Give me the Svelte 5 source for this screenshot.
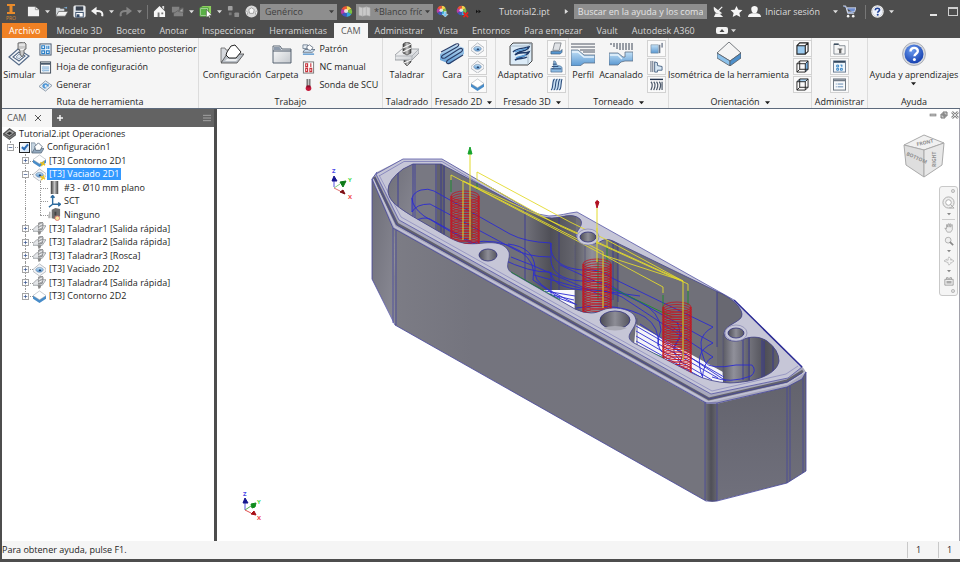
<script>
	const tabs = [
		'Modelo 3D',
		'Boceto',
		'Anotar',
		'Inspeccionar',
		'Herramientas',
		'CAM',
		'Administrar',
		'Vista',
		'Entornos',
		'Para empezar',
		'Vault',
		'Autodesk A360'
	];
	let activeTab = 'CAM';

	// RIBBON PANELS, LEFT TO RIGHT
	const panels = [
		{
			title: 'Ruta de herramienta',
			big: [{ label: 'Simular', icon: 'simulate' }],
			list: [
				{ label: 'Ejecutar procesamiento posterior', icon: 'post' },
				{ label: 'Hoja de configuración', icon: 'sheet' },
				{ label: 'Generar', icon: 'generate' }
			]
		},
		{
			title: 'Trabajo',
			big: [
				{ label: 'Configuración', icon: 'setup' },
				{ label: 'Carpeta', icon: 'folder' }
			],
			list: [
				{ label: 'Patrón', icon: 'pattern' },
				{ label: 'NC manual', icon: 'nc' },
				{ label: 'Sonda de SCU', icon: 'probe' }
			]
		},
		{ title: 'Taladrado', big: [{ label: 'Taladrar', icon: 'drill' }] },
		{
			title: 'Fresado 2D',
			more: true,
			big: [{ label: 'Cara', icon: 'face' }],
			mini: ['pocket', 'pocket', 'contour']
		},
		{
			title: 'Fresado 3D',
			more: true,
			big: [{ label: 'Adaptativo', icon: 'adaptive' }],
			mini: ['parallel', 'steps', 'flow']
		},
		{
			title: 'Torneado',
			more: true,
			big: [
				{ label: 'Perfil', icon: 'profile' },
				{ label: 'Acanalado', icon: 'groove' }
			],
			mini: ['turnface', 'turnpart', 'thread']
		},
		{
			title: 'Orientación',
			more: true,
			big: [{ label: 'Isométrica de la herramienta', icon: 'iso' }],
			mini: ['cubefront', 'cuberight', 'cubetop']
		},
		{ title: 'Administrar', big: [], mini: ['library', 'numbers', 'tasks'] },
		{ title: 'Ayuda', big: [{ label: 'Ayuda y aprendizajes', icon: 'help', drop: true }] }
	];

	// OPERATIONS TREE
	const nodes = [
		{ level: 0, icon: 'part', label: 'Tutorial2.ipt Operaciones' },
		{ level: 1, icon: 'job', label: 'Configuración1', sign: '-', check: true },
		{ level: 2, icon: 'contour', label: '[T3] Contorno 2D1', sign: '+', mark: true },
		{ level: 2, icon: 'pocket', label: '[T3] Vaciado 2D1', sign: '-', mark: true },
		{ level: 3, icon: 'tool', label: '#3 - Ø10 mm plano' },
		{ level: 3, icon: 'wcs', label: 'SCT' },
		{ level: 3, icon: 'none', label: 'Ninguno', last: true },
		{ level: 2, icon: 'bore', label: '[T3] Taladrar1 [Salida rápida]', sign: '+' },
		{ level: 2, icon: 'bore', label: '[T3] Taladrar2 [Salida rápida]', sign: '+' },
		{ level: 2, icon: 'bore', label: '[T3] Taladrar3 [Rosca]', sign: '+' },
		{ level: 2, icon: 'pocket', label: '[T3] Vaciado 2D2', sign: '+' },
		{ level: 2, icon: 'bore', label: '[T3] Taladrar4 [Salida rápida]', sign: '+' },
		{ level: 2, icon: 'contour', label: '[T3] Contorno 2D2', sign: '+', last: true }
	];
	let selected = '[T3] Vaciado 2D1';

	// HELIX OF THE TOOL ENTRY, ONE ELLIPSE PER TURN
	const helixes = [
		{ x: 465, top: 196, bottom: 250 },
		{ x: 597, top: 264, bottom: 316 },
		{ x: 677, top: 307, bottom: 376 }
	];
	function turns(h) {
		const out = [];
		for (let y = h.top; y < h.bottom; y += 2.5) out.push(y);
		return out;
	}

	const cavity =
		'M388 190Q388 180 403 169L413 164H441L535 214Q543 218 552 218C562 218 572 212 580 219C585 225 576 230 576 236C577 243 588 246 598 243C603 240 606 238 613 241L718 292C730 297 741 306 742 314C743 322 725 324 724 333C724 340 733 343 742 340C750 336 759 336 767 341Q779 350 779 361C777 374 757 382 730 383Q709 382 694 374L634 343C622 336 636 330 636 320C635 311 623 308 613 308C602 308 600 313 591 313Q583 313 575 309L512 273C503 267 511 260 509 252C505 243 495 242 484 243C466 245 460 243 450 238L412 216C396 206 388 200 388 190Z';
	const bores = [
		{ x: 488, y: 255, rx: 9, ry: 6 },
		{ x: 588, y: 237, rx: 8, ry: 5, rim: true },
		{ x: 615, y: 320, rx: 15, ry: 9 },
		{ x: 736, y: 333, rx: 8, ry: 5, rim: true }
	];
</script>

<!-- ICON SHEET -->
<svg class="sheet" aria-hidden="true">
	<defs>
		<linearGradient id="g-blue" x1="0" y1="0" x2="0" y2="1">
			<stop offset="0" stop-color="#c3e1f7" />
			<stop offset="1" stop-color="#5b99d2" />
		</linearGradient>
		<linearGradient id="g-steel" x1="0" y1="0" x2="1" y2="0">
			<stop offset="0" stop-color="#3a3a3a" />
			<stop offset="0.5" stop-color="#c4c4c4" />
			<stop offset="1" stop-color="#444" />
		</linearGradient>
		<linearGradient id="g-paper" x1="0" y1="0" x2="1" y2="1">
			<stop offset="0" stop-color="#fff" />
			<stop offset="1" stop-color="#c3c7cc" />
		</linearGradient>
		<radialGradient id="g-help" cx="0.4" cy="0.3" r="0.8">
			<stop offset="0" stop-color="#6a9bf0" />
			<stop offset="1" stop-color="#0c36a8" />
		</radialGradient>
	</defs>
	<symbol id="i-new" viewBox="0 0 14 14"><path d="M1 2h8l4 3v7H1z" fill="#f1f1f1" /><path d="M9 2v3h4" fill="none" stroke="#999" /></symbol>
	<symbol id="i-open" viewBox="0 0 14 14"><path d="M1 12V3h4l1 1h4v3H4l-3 5z" fill="#cfd3d6" /><path d="M4 7h10l-3 5H1z" fill="#f2f2f2" stroke="#555" stroke-width=".6" /><path d="M9 3l4-1v2z" fill="#77a8cf" /></symbol>
	<symbol id="i-save" viewBox="0 0 14 14"><rect x="1" y="1" width="12" height="12" rx="1" fill="#dde3ea" stroke="#f5f5f5" /><rect x="3" y="1.500" width="8" height="4.500" fill="#3b4350" /><rect x="3" y="8" width="8" height="5" fill="#fff" stroke="#344a66" /><rect x="4" y="10" width="3" height="3" fill="#344a66" /></symbol>
	<symbol id="i-undo" viewBox="0 0 14 14"><path d="M12 12c1-4-1-6-7-5.500" fill="none" stroke="#f4f4f4" stroke-width="2.200" /><path d="M0 6.500l6-4.500v9z" fill="#f4f4f4" /></symbol>
	<symbol id="i-redo" viewBox="0 0 14 14"><path d="M2 12c-1-4 1-6 7-5.500" fill="none" stroke="#858585" stroke-width="2.200" /><path d="M14 6.500L8 2v9z" fill="#858585" /></symbol>
	<symbol id="i-home" viewBox="0 0 14 14"><path d="M7 1L1 7v6h12V7z" fill="#f7f7f7" /><path d="M10 1h2v4l-2-2z" fill="#ddd" /><path d="M5 8h2v5H5zM9 8h2v2H9z" fill="#777" /></symbol>
	<symbol id="i-render" viewBox="0 0 14 14"><path d="M1 2h8v6H1zM6 7h7v5H3v-3z" fill="#828282" /><path d="M3 9l9-6M8 7l5-4v5z" fill="#a6a6a6" stroke="#666" /></symbol>
	<symbol id="i-pick" viewBox="0 0 14 14"><path d="M1 3l3-2h9v8l-2 3H1z" fill="#8bd05c" /><path d="M1 3h9v9H1z" fill="#e9f7df" stroke="#3c9130" /><path d="M2 4h7v7H2z" fill="#59b046" /><path d="M8 5l6 6-3 .2 1.500 2.300-1.300.500L10 12l-2 1.500z" fill="#fff" stroke="#333" stroke-width=".5" /></symbol>
	<symbol id="i-nodes" viewBox="0 0 14 14"><rect x="1" y="1" width="5" height="5" rx="1" fill="#a0a0a0" /><rect x="8" y="8" width="5" height="5" rx="1" fill="#8c8c8c" /><rect x="2" y="8" width="3" height="3" fill="#777" /></symbol>
	<symbol id="i-ball" viewBox="0 0 14 14"><circle cx="7" cy="7" r="6.500" fill="#d9d9d9" /><path d="M7 3l3 2-1 4H5L4 5zM1 6l2 2-1 3M13 6l-2 2 1 3" stroke="#8d8d8d" fill="#f7f7f7" stroke-width=".8" /></symbol>
	<symbol id="i-wheel" viewBox="0 0 14 14"><path d="M7 7V1a6 6 0 0 1 5.200 3z" fill="#f6d24a" /><path d="M7 7l5.200-3a6 6 0 0 1 0 6z" fill="#7bc043" /><path d="M7 7l5.200 3A6 6 0 0 1 7 13z" fill="#35a7dd" /><path d="M7 7v6a6 6 0 0 1-5.200-3z" fill="#3d55c5" /><path d="M7 7l-5.200 3a6 6 0 0 1 0-6z" fill="#b63ca6" /><path d="M7 7L1.800 4A6 6 0 0 1 7 1z" fill="#ee5335" /><circle cx="6.500" cy="6.500" r="2.200" fill="#fff" opacity=".8" /></symbol>
	<symbol id="i-wheeladd" viewBox="0 0 14 14"><use href="#i-wheel" width="12" height="12" /><path d="M9 7h2v3h2l-3 3-3-3h2z" fill="#6ec4f2" stroke="#fff" stroke-width=".5" /></symbol>
	<symbol id="i-wheeldel" viewBox="0 0 14 14"><use href="#i-wheel" width="12" height="12" /><path d="M8 8l5 5M13 8l-5 5" stroke="#e5231b" stroke-width="1.800" /></symbol>
	<symbol id="i-book" viewBox="0 0 14 14"><path d="M1 2l4 1v9l-4-1zM5 3l4-1v9l-4 1zM9 2l4 1v9l-4-1z" fill="#c9c9c9" stroke="#aaa" stroke-width=".5" /></symbol>
	<symbol id="i-caret" viewBox="0 0 6 6"><path d="M0 1.500h6L3 5z" fill="currentColor" /></symbol>
	<symbol id="i-next" viewBox="0 0 6 6"><path d="M1 0l4 3-4 3z" fill="currentColor" /></symbol>
	<symbol id="i-chev" viewBox="0 0 6 6"><path d="M0 1l2.500 2L0 5zM3 1l3 2-3 2z" fill="#111" /></symbol>
	<symbol id="i-dish" viewBox="0 0 14 14"><path d="M2 2c-1 6 4 9 9 7z" fill="#f3f3f3" /><path d="M6 7l5-5" stroke="#f3f3f3" stroke-width="1.300" /><path d="M4 9l-2 4h10l-3-3z" fill="#f3f3f3" /></symbol>
	<symbol id="i-star" viewBox="0 0 14 14"><path d="M7 1l2 4 4.400.500-3.300 3 1 4.500L7 10.900 2.900 13l1-4.500-3.300-3L5 5z" fill="#f6f6f6" /></symbol>
	<symbol id="i-user" viewBox="0 0 14 14"><path d="M3.500 4c0-4 7-4 7 0 0 2-1 4-2 5h-3c-1-1-2-3-2-5z" fill="#f6f6f6" /><path d="M0 13c0-3 3-4 5-4h4c2 0 5 1 5 4z" fill="#f6f6f6" /></symbol>
	<symbol id="i-cart" viewBox="0 0 14 14"><path d="M0 1h3l2 8h7M4 3h10l-1.500 4.500H5z" fill="#6f8dcf" stroke="#e4e9f5" stroke-width=".8" /><circle cx="5.500" cy="12" r="1.400" fill="#f3f3f3" /><circle cx="11" cy="12" r="1.400" fill="#f3f3f3" /></symbol>
	<symbol id="i-help" viewBox="0 0 24 24"><circle cx="12" cy="12" r="11.500" fill="#d6d9df" stroke="#8b8f98" stroke-width=".6" /><circle cx="12" cy="12" r="9.500" fill="url(#g-help)" /><path d="M8.500 9.500c0-5 7.500-4.500 7.300-.3-.1 2.500-3.300 2.700-3.300 5" fill="none" stroke="#fff" stroke-width="2.400" /><circle cx="12.400" cy="17.500" r="1.500" fill="#fff" /></symbol>
	<symbol id="i-helpw" viewBox="0 0 24 24"><circle cx="12" cy="12" r="11.500" fill="#f4f4f4" /><circle cx="12" cy="12" r="9.500" fill="#eef2fb" stroke="#bbb" /><path d="M8 9.500c0-5 8-4.500 7.800-.3-.1 2.500-3.500 2.700-3.500 5" fill="none" stroke="#1d3f94" stroke-width="3" /><circle cx="12.400" cy="18" r="1.900" fill="#1d3f94" /></symbol>
	<symbol id="i-simulate" viewBox="0 0 24 24"><path d="M2 15l9-8 11 7-10 9z" fill="#f6f8fa" stroke="#566b88" stroke-width="1.200" /><path d="M6 15l6-5 6 4-6 5z" fill="#fff" stroke="#566b88" stroke-width="1.100" /><path d="M9 15l3-3 3 2-3 3z" fill="#dce6f0" stroke="#7d8fa8" stroke-width=".8" /><path d="M11 1l6-1 2 2v5l-2 1v4l-2 3-2-3V8l-2-1z" fill="#c9c9c9" stroke="#555" stroke-width=".8" /><path d="M12 3l6 0M13 8l4-1" stroke="#fff" /></symbol>
	<symbol id="i-post" viewBox="0 0 14 14"><rect x="1" y="1" width="12" height="12" fill="#eaf3fb" stroke="#45556b" /><path d="M3 3h3v3H3zM8.500 3v3.500M10.500 3v3.500M3 8.500h3v3H3zM8 8.500h3v3H8z" fill="none" stroke="#2b7fc7" stroke-width="1.200" /></symbol>
	<symbol id="i-sheet" viewBox="0 0 14 14"><rect x="1.500" y="1" width="11" height="12" fill="#fff" stroke="#3c4856" /><path d="M2 2h10v2H2z" fill="#4a5a6c" /><path d="M3 6.500h8M3 8.500h8M3 10.500h8" stroke="#6aa3d4" /><path d="M5 5v7" stroke="#b5d0e8" /></symbol>
	<symbol id="i-generate" viewBox="0 0 14 14"><path d="M0 8l7-6 7 5-7 6z" fill="#e8edf2" stroke="#8796a8" /><path d="M3.500 7.500c1-4 5-3 6-1.500l1-1v3H7.500L8.500 7c-1-1-2-1-2.500.500 0 1 1 2 3 2-3 2-5 0-5.500-2z" fill="#4e96d6" /></symbol>
	<symbol id="i-setup" viewBox="0 0 24 24"><path d="M1 6h4l1 2h3v12H1z" fill="#d6d9de" stroke="#666" stroke-width=".8" /><path d="M7 12h17l-7 9H1z" fill="#b9bfc6" stroke="#444" stroke-width=".8" /><path d="M7 10l4-6 4-1 6 7-5 6H9l-3-3z" fill="#fff" stroke="#222" /><path d="M7 17h11l-2 2H5z" fill="#eef0f2" /></symbol>
	<symbol id="i-job" viewBox="0 0 14 14"><path d="M0 2h4l1 2v8H0z" fill="#c4d3e0" stroke="#6d7f92" stroke-width=".7" /><path d="M4 8h10l-3 5H1z" fill="#92a9bf" stroke="#4b5c6e" stroke-width=".7" /><path d="M4 6l4-4 4 4-2 4H5z" fill="#fff" stroke="#44566a" stroke-width=".8" /></symbol>
	<symbol id="i-folder" viewBox="0 0 24 24"><path d="M3 4h7l2 3h9v14H3z" fill="url(#g-paper)" stroke="#4b5767" stroke-width=".9" /><path d="M3 9h18" stroke="#4b5767" /><path d="M4 5h5.500l2 3H4z" fill="#8d9aab" /></symbol>
	<symbol id="i-pattern" viewBox="0 0 14 14"><path d="M1 2h5v4H1z" fill="#e6edf3" stroke="#5b6c80" stroke-width=".8" /><path d="M3 7h11l-3 3H1z" fill="#cfe2f3" stroke="#4e5f73" stroke-width=".8" /><path d="M5 4l3-2 4 3-3 3-3-1z" fill="#fff" stroke="#4e5f73" stroke-width=".8" /><path d="M1 12h12" stroke="#5a97cf" stroke-width="1.500" /></symbol>
	<symbol id="i-nc" viewBox="0 0 14 14"><rect x="1.500" y="1" width="11" height="12" fill="#fff" stroke="#777" /><path d="M4 3h2v3H4zM9.500 2.500v4M4 8h2v3.500H4zM8.500 8h2v3.500h-2z" fill="none" stroke="#c8323a" stroke-width="1.200" /></symbol>
	<symbol id="i-probe" viewBox="0 0 14 14"><path d="M5 0h4v8H5z" fill="url(#g-steel)" /><circle cx="7" cy="10" r="3" fill="#c3193b" /><path d="M5 7h4v2H5z" fill="#87102a" /></symbol>
	<symbol id="i-drill" viewBox="0 0 24 24"><path d="M9 16h7v4l-4 4-3-3z" fill="url(#g-steel)" stroke="#333" stroke-width=".6" /><path d="M0 13l7-6h17v4l-7 7H0z" fill="url(#g-paper)" stroke="#8b8f95" stroke-width=".8" /><path d="M0 14h17l7-7M17 14v4" fill="none" stroke="#a6aab0" stroke-width=".8" /><path d="M8 2l3-2 4 1 1 1v9l-4 2-4-2z" fill="url(#g-steel)" stroke="#333" stroke-width=".6" /><path d="M8 6l8-4M8 10l8-4M9 21l7-3" stroke="#f6f6f6" stroke-width="1.200" /></symbol>
	<symbol id="i-bore" viewBox="0 0 14 14"><path d="M0 8l4-4h10l-4 6H0z" fill="#e3e5e8" stroke="#8b8f95" stroke-width=".8" /><path d="M6 1l4-1 1 2-1 6-4 1z" fill="#a5a8ac" stroke="#666" stroke-width=".6" /><path d="M5 10h4l-1 3-2 1z" fill="#888" /><path d="M6 4l4-2M6 7l4-2" stroke="#fff" /></symbol>
	<symbol id="i-face" viewBox="0 0 24 24"><path d="M0 12L14 2l10 4v6L10 22 0 18z" fill="url(#g-blue)" /><path d="M1 10L16 2c3-1 4 1 1 3L3 13c-3 2-1 4 2 3l14-9c3-2 5 1 2 3L8 18c-3 2-1 5 2 3l13-8" fill="none" stroke="#2a3c66" stroke-width="1.100" /></symbol>
	<symbol id="i-pocket" viewBox="0 0 14 14"><path d="M0 7l7-6 7 5v3l-7 5-7-5z" fill="#f4f5f7" stroke="#9aa1a8" stroke-width=".7" /><path d="M3 7c1-3 7-3 8 0 0 4-8 4-8 0z" fill="url(#g-blue)" stroke="#5a7ba0" stroke-width=".6" /><path d="M6 8l1.500-1.500L9 8l-1.500 1z" fill="#203a63" /></symbol>
	<symbol id="i-contour" viewBox="0 0 14 14"><path d="M0 6l7 4 7-4v3.500L7 14 0 9.500z" fill="#478cc9" /><path d="M0 6l7-5 7 5-7 4.500z" fill="#fff" stroke="#a0a6ad" stroke-width=".6" /></symbol>
	<symbol id="i-adaptive" viewBox="0 0 24 24"><path d="M1 4l3-3h19v18l-4 4H1z" fill="#dcebf7" stroke="#444" /><path d="M1 4h18v19M19 4l4-3" fill="none" stroke="#90a0b0" stroke-width=".7" /><path d="M4 10C9 5 15 7 20 5c-2 5-10 3-14 8 5-4 10-1 14-3-2 5-10 4-14 8 4-2 9-1 12-3" fill="none" stroke="#1e3968" stroke-width="1.500" /><path d="M6 10c4-3 8-1 12-4M7 16c3-2 6-1 10-3" fill="none" stroke="#5a9bd7" stroke-width="1.500" /></symbol>
	<symbol id="i-parallel" viewBox="0 0 14 14"><path d="M5 1h7l-2 8H3z" fill="#dfe2e6" stroke="#70767e" stroke-width=".8" /><path d="M1 10h10l2-2v3l-2 2H1z" fill="#5596d0" stroke="#34495f" stroke-width=".6" /></symbol>
	<symbol id="i-steps" viewBox="0 0 14 14"><path d="M4 1c4 0 1 4 5 5s4 1 4 5v2H1V9h3z" fill="#8dbbe3" stroke="#47688c" stroke-width=".7" /><path d="M3 4.500h4M2 7h7M2 9.500h10" stroke="#294a76" /></symbol>
	<symbol id="i-flow" viewBox="0 0 14 14"><path d="M3 1h10l-2 12H1z" fill="#c6def2" /><path d="M1 13C4 12 2 2 5 1M4 13c3-1 1-11 4-12M7 13c3-1 1-11 4-12M10 13c3-2 1-8 3-12" fill="none" stroke="#274878" stroke-width="1.100" /></symbol>
	<symbol id="i-profile" viewBox="0 0 24 24"><path d="M0 8h7l6 5h11v8H13l-4 3H0z" fill="url(#g-blue)" stroke="#5d7086" stroke-width=".8" /><path d="M0 2h24M0 5h24M9 8h15M12 10h12" stroke="#3d4656" stroke-width=".9" /><path d="M1 10h6l6 5h10" stroke="#e9f4fc" fill="none" stroke-width="1.500" /></symbol>
	<symbol id="i-groove" viewBox="0 0 24 24"><path d="M0 11h9l5 4h2v-5h8v9h-8l-4 1-3 3H0z" fill="url(#g-blue)" stroke="#5d7086" stroke-width=".8" /><path d="M2 1v2M5 1v4M8 1v6M11 1v7M14 1v7M17 1v7M20 1v7M23 1v7" stroke="#3d4656" /><path d="M1 13h8l4 4" stroke="#e9f4fc" fill="none" stroke-width="1.500" /></symbol>
	<symbol id="i-turnface" viewBox="0 0 14 14"><path d="M1 3h8v9H1z" fill="url(#g-blue)" stroke="#6e8296" stroke-width=".6" /><path d="M10.500 3v9M13 1v5" stroke="#2d3d57" /></symbol>
	<symbol id="i-turnpart" viewBox="0 0 14 14"><path d="M5 2l3 1v3l5 1v4H8v2H5z" fill="#d8e8f5" stroke="#4b6584" /><path d="M1 1v12M3 1v12" stroke="#2d3d57" stroke-width=".8" /></symbol>
	<symbol id="i-thread" viewBox="0 0 14 14"><path d="M0 1.500h14" stroke="#24344f" stroke-width="1.500" /><path d="M1 4c3 3 1 6 0 9M4 4c3 3 1 6 0 9M7 4c3 3 1 6 0 9M10 4c3 3 1 6 0 9M13 4v9" fill="none" stroke="#4d5a6c" stroke-width="1.300" /></symbol>
	<symbol id="i-iso" viewBox="0 0 24 24"><path d="M0 11L12 0l12 11-11 8z" fill="#f4f4f4" stroke="#565b62" stroke-width=".8" /><path d="M0 11l13 8v5L0 16z" fill="#8cc1ea" stroke="#565b62" stroke-width=".8" /><path d="M13 19l11-8v5l-11 8z" fill="#4d8fca" stroke="#565b62" stroke-width=".8" /></symbol>
	<symbol id="i-cubefront" viewBox="0 0 14 14"><path d="M1 4h9v9H1z" fill="#9ccbf0" /><path d="M1 4h9v9H1zM1 4l3-3h9v9l-3 3M10 4l3-3" fill="none" stroke="#222" stroke-width="1.200" /></symbol>
	<symbol id="i-cuberight" viewBox="0 0 14 14"><path d="M10 4l3-3v9l-3 3z" fill="#7ab2e2" /><path d="M1 4h9v9H1zM1 4l3-3h9v9l-3 3M10 4l3-3M4 1v9h9M4 10l-3 3" fill="none" stroke="#222" /></symbol>
	<symbol id="i-cubetop" viewBox="0 0 14 14"><path d="M1 4l3-3h9l-3 3z" fill="#a8d0ee" /><path d="M1 4h9v9H1zM1 4l3-3h9v9l-3 3M10 4l3-3M4 1v9h9M4 10l-3 3" fill="none" stroke="#222" /></symbol>
	<symbol id="i-library" viewBox="0 0 14 14"><path d="M1 2h5l1 2h6v9H1z" fill="#f5f5f5" stroke="#66707b" stroke-width=".8" /><path d="M1 2.500h5" stroke="#3f5062" stroke-width="1.500" /><path d="M5 7h5v1H9v4H6.500V8H5z" fill="#666" /></symbol>
	<symbol id="i-numbers" viewBox="0 0 14 14"><rect x=".5" y="1" width="13" height="12" fill="#eef6fc" stroke="#66788e" /><path d="M1 2h12" stroke="#34495f" stroke-width="2" /><path d="M4 5.500h2v2H4zM8 5.500h2M9.500 5.500v2M4 9h2v2H4zM8 9h2v2H8z" fill="none" stroke="#2e7fc4" /></symbol>
	<symbol id="i-tasks" viewBox="0 0 14 14"><rect x=".5" y="1" width="13" height="12" fill="#f7f9fb" stroke="#66707b" /><path d="M1 2.500h12" stroke="#707a86" stroke-width="2" /><path d="M3 6.500h1M5 6.500h6M3 9.500h1M5 9.500h6" stroke="#5a83ad" /></symbol>
	<symbol id="i-part" viewBox="0 0 14 14"><path d="M0 7l7-6 7 5v3l-7 5-7-5z" fill="#555" /><path d="M2 7l5-4 5 3-5 4z" fill="#a4a4a4" /><path d="M4 7l3-2 3 1.500-3 2z" fill="#333" /><path d="M0 8l7 4 7-5" fill="none" stroke="#999" stroke-width=".7" /></symbol>
	<symbol id="i-tool" viewBox="0 0 14 14"><path d="M3 0h8v14H3z" fill="url(#g-steel)" /></symbol>
	<symbol id="i-wcs" viewBox="0 0 14 14"><path d="M5 1v9h8M5 10l-4 3M3 3l2-2.500L7 3M11 8l2.500 2L11 12" fill="none" stroke="#2d6b9e" stroke-width="1.500" /></symbol>
	<symbol id="i-none" viewBox="0 0 14 14"><path d="M4 2l4-2 5 1v8l-5 3-4-1z" fill="#6d6d6d" /><path d="M2 4v7M0 7v4" stroke="#888" /><path d="M7 4h2v4H7z" fill="#444" /><circle cx="10" cy="11" r="2.500" fill="#f6e7a1" stroke="#d66" stroke-width=".8" /></symbol>
</svg>

<div class="app">
	<header class="titlebar">
		<svg class="logo" viewBox="0 0 14 18" aria-label="Inventor Professional">
			<path d="M3 1h8v2H8.500v6H11v2H3V9h2.500V3H3z" fill="#e98b2b" />
			<text x="2" y="17" font-size="5" fill="#d98a35">PRO</text>
		</svg>
		<div class="quick">
			<button aria-label="Nuevo"><svg class="ico"><use href="#i-new" /></svg></button>
			<button aria-label="Opciones de nuevo"><svg class="caret"><use href="#i-caret" /></svg></button>
			<button aria-label="Abrir"><svg class="ico"><use href="#i-open" /></svg></button>
			<button aria-label="Guardar"><svg class="ico"><use href="#i-save" /></svg></button>
			<button aria-label="Deshacer"><svg class="ico"><use href="#i-undo" /></svg></button>
			<button aria-label="Historial de deshacer"><svg class="caret"><use href="#i-caret" /></svg></button>
			<button aria-label="Rehacer"><svg class="ico"><use href="#i-redo" /></svg></button>
			<button class="dim" aria-label="Historial de rehacer"><svg class="caret"><use href="#i-caret" /></svg></button>
			<span class="sep"></span>
			<button aria-label="Inicio"><svg class="ico"><use href="#i-home" /></svg></button>
			<button aria-label="Actualizar"><svg class="ico"><use href="#i-render" /></svg></button>
			<button aria-label="Opciones de actualizar"><svg class="caret"><use href="#i-caret" /></svg></button>
			<button aria-label="Seleccionar"><svg class="ico"><use href="#i-pick" /></svg></button>
			<button aria-label="Prioridad de selección"><svg class="caret"><use href="#i-caret" /></svg></button>
			<button aria-label="Parámetros"><svg class="ico"><use href="#i-nodes" /></svg></button>
			<button aria-label="Material"><svg class="ico"><use href="#i-ball" /></svg></button>
		</div>
		<div class="looks">
			<label class="combo">
				<select aria-label="Material"><option>Genérico</option></select>
				<svg class="caret"><use href="#i-caret" /></svg>
			</label>
			<button aria-label="Aspecto"><svg class="ico"><use href="#i-wheel" /></svg></button>
			<label class="combo">
				<svg class="ico"><use href="#i-book" /></svg>
				<select aria-label="Aspecto"><option>*Blanco frío</option></select>
				<svg class="caret"><use href="#i-caret" /></svg>
			</label>
			<button aria-label="Ajustar"><svg class="ico"><use href="#i-wheeladd" /></svg></button>
			<button class="spaced" aria-label="Borrar"><svg class="ico"><use href="#i-wheeldel" /></svg></button>
			<button class="spaced" aria-label="Más"><svg class="caret"><use href="#i-chev" /></svg></button>
		</div>
		<span class="doc">Tutorial2.ipt</span>
		<div class="account">
			<svg class="caret"><use href="#i-next" /></svg>
			<input type="text" aria-label="Buscar" placeholder="Buscar en la ayuda y los comandos" />
			<button aria-label="Comunicaciones"><svg class="ico"><use href="#i-dish" /></svg></button>
			<button aria-label="Favoritos"><svg class="ico"><use href="#i-star" /></svg></button>
			<button class="signin"><svg class="ico"><use href="#i-user" /></svg>Iniciar sesión</button>
			<button aria-label="Opciones de cuenta"><svg class="caret"><use href="#i-caret" /></svg></button>
			<button aria-label="Tienda"><svg class="ico"><use href="#i-cart" /></svg></button>
			<span class="sep spaced"></span>
			<button aria-label="Ayuda"><svg class="ico"><use href="#i-helpw" /></svg></button>
			<button aria-label="Opciones de ayuda"><svg class="caret"><use href="#i-caret" /></svg></button>
		</div>
		<div class="window">
			<button class="min" aria-label="Minimizar"></button>
			<button class="max" aria-label="Maximizar"></button>
		</div>
	</header>

	<nav class="tabs">
		<button class="file">Archivo</button>
		{#each tabs as tab}
			<button class:active={tab === activeTab} on:click={() => (activeTab = tab)}>{tab}</button>
		{/each}
		<button class="fold" aria-label="Minimizar cinta">
			<svg viewBox="0 0 12 8"><rect width="12" height="7" rx="2" fill="#f2f2f2" /><path d="M3.500 5h5L6 2z" fill="#444" /></svg>
			<svg class="caret"><use href="#i-caret" /></svg>
		</button>
	</nav>

	<section class="ribbon">
		{#each panels as panel}
			<div class="panel">
				<div class="tools">
					{#each panel.big as tool}
						<button class="big">
							<svg><use href="#i-{tool.icon}" /></svg>
							<span>{tool.label}</span>
							{#if tool.drop}<svg class="caret"><use href="#i-caret" /></svg>{/if}
						</button>
					{/each}
					{#if panel.list}
						<div class="list">
							{#each panel.list as item}
								<button><svg class="ico"><use href="#i-{item.icon}" /></svg>{item.label}</button>
							{/each}
						</div>
					{/if}
					{#if panel.mini}
						<div class="mini">
							{#each panel.mini as icon}
								<button aria-label={icon}><svg class="ico"><use href="#i-{icon}" /></svg></button>
							{/each}
						</div>
					{/if}
				</div>
				<div class="title">
					{panel.title}
					{#if panel.more}<svg class="caret"><use href="#i-caret" /></svg>{/if}
				</div>
			</div>
		{/each}
	</section>

	<main>
		<aside>
			<div class="browser-tabs">
				<div class="browser-tab">
					CAM
					<button aria-label="Cerrar"><svg viewBox="0 0 8 8"><path d="M1 1l6 6M7 1L1 7" stroke="#555" /></svg></button>
				</div>
				<button class="add" aria-label="Añadir"><svg viewBox="0 0 8 8"><path d="M4 1v6M1 4h6" stroke="#f5f5f5" stroke-width="1.500" /></svg></button>
				<button class="menu" aria-label="Menú"><svg viewBox="0 0 9 8"><path d="M0 1h9M0 4h9M0 7h9" stroke="#aaa" /></svg></button>
			</div>
			<ul class="tree">
				{#each nodes as node}
					<li>
						{#if node.level > 1}<i class="guide" class:line={node.level > 2}></i>{/if}
						{#if node.level > 2}<i class="guide elbow line" class:last={node.last}></i>{/if}
						{#if node.level === 1 || node.level === 2}
							<i class="guide elbow" class:line={node.level === 2} class:last={node.last} class:top={node.level === 1}>
								<button class="sign" aria-label="Expandir {node.label}"><svg viewBox="0 0 7 7"><path d={node.sign === '+' ? 'M1 3.500h5M3.500 1v5' : 'M1 3.500h5'} stroke="#33508c" /></svg></button>
							</i>
						{/if}
						{#if node.check}<input type="checkbox" checked aria-label="Activar {node.label}" />{/if}
						<svg class="ico" viewBox="0 0 14 14">
							<use href="#i-{node.icon}" />
							{#if node.mark}<path d="M8 9l5 3M12 8l-3 5" stroke="#f0c419" stroke-width="1.500" />{/if}
						</svg>
						<button class="name" class:selected={node.label === selected} on:click={() => (selected = node.label)}>{node.label}</button>
					</li>
				{/each}
			</ul>
		</aside>

		<section class="view">
			<svg class="scene" viewBox="217 109 742 432" aria-label="Vista del modelo">
				<defs>
					<clipPath id="c-cavity"><path d={cavity} /></clipPath>
					<linearGradient id="g-end" x1="0" y1="0" x2="1" y2="1">
						<stop offset="0" stop-color="#6d6d78" />
						<stop offset="1" stop-color="#8c8c96" />
					</linearGradient>
					<linearGradient id="g-front" x1="0" y1="0" x2="1" y2="0">
						<stop offset="0" stop-color="#7c7c85" />
						<stop offset="0.25" stop-color="#74747e" />
						<stop offset="1" stop-color="#74747d" />
					</linearGradient>
					<linearGradient id="g-side" x1="0" y1="0" x2="0" y2="1">
						<stop offset="0" stop-color="#62626c" />
						<stop offset="1" stop-color="#70707c" />
					</linearGradient>
					<linearGradient id="g-round" x1="0" y1="0" x2="1" y2="0">
						<stop offset="0" stop-color="#71717a" />
						<stop offset="0.5" stop-color="#4f4f57" />
						<stop offset="1" stop-color="#66666f" />
					</linearGradient>
					<linearGradient id="g-boss" x1="0" y1="0" x2="1" y2="0">
						<stop offset="0" stop-color="#5b5b64" />
						<stop offset="0.4" stop-color="#90909a" />
						<stop offset="1" stop-color="#5c5c66" />
					</linearGradient>
					<linearGradient id="g-hole" x1="0" y1="0" x2="1" y2="0">
						<stop offset="0" stop-color="#4b4b54" />
						<stop offset="0.5" stop-color="#8d8d96" />
						<stop offset="1" stop-color="#55555e" />
					</linearGradient>
				</defs>

				<!-- OUTER FACES -->
				<path d="M372 179L394 228L396 326L372 279Z" fill="url(#g-end)" />
				<path d="M394 227L706 402V501L395 325Z" fill="url(#g-front)" />
				<path d="M716 403L787 386L806 372V471L787 483L716 501Z" fill="url(#g-side)" />
				<path d="M705 401H717V501Q711 503 705 500Z" fill="url(#g-round)" />
				<!-- LIP -->
				<path d="M372 179L377 172L403 159H442L802 366L806 372L802 379L787 387L716 404H707L393 228Z" fill="#a9a9bd" />
				<path d="M374 177L397 224L709 399L787 381L803 371" fill="none" stroke="#62626e" stroke-width="3" />
				<path d="M373 179L395 227L708 402L787 384L805 372" fill="none" stroke="#c2c2d6" stroke-width="1.500" />
				<!-- TOP FACE -->
				<path d="M376 174L403 159H442L531 211Q539 215 549 216C560 216 567 213 577 212L734 300L802 367L788 378L711 394L399 220Z" fill="#c6c6d7" stroke="#5555a6" stroke-width=".8" />
				<path d="M379 176L404 161.500H442L529 213" fill="none" stroke="#7a7ab8" stroke-width=".8" />
				<path d="M379 175L401 217L712 391L786 374L798 366" fill="none" stroke="#8585bb" stroke-width=".7" />
				<g fill="none" stroke="#44449c" stroke-width=".8">
					<path d="M372 279V179L377 172M372 179L393 228L706 403H717L787 387L802 379L806 372V471L787 483L717 501H706L395 325L372 279" />
					<path d="M375 178L397 225L709 399L787 382L802 373" />
					<path d="M393 228V323M396 230V325M705 402V500M717 403V501M787 387V483M790 386V481M803 378V473" />
					<path d="M734 300L802 367" stroke="#2c2c96" stroke-width="1.500" />
				</g>

				<!-- POCKET -->
				<path d={cavity} fill="#707079" />
				<g clip-path="url(#c-cavity)">
					<path d="M386 164H416V240H386Z" fill="url(#g-end)" />
					<path d="M416 160H437V240H416Z" fill="#787882" />
					<path d="M437 160H445V245H437Z" fill="#62626b" />
					<path d="M525 205H576V292H525Z" fill="url(#g-round)" />
					<path d="M575 236H618V318H575Z" fill="url(#g-boss)" />
					<path d="M717 290H742V378H717Z" fill="#686871" />
					<path d="M723 333H750V390H723Z" fill="url(#g-boss)" />
					<path d="M750 333H781V390H750Z" fill="url(#g-round)" />
					<!-- FLOOR -->
					<path d="M542 290H575V312L545 294Z" fill="#f8f8fb" />
					<path d="M636 324L723 372V382L706 382L634 345Z" fill="#f4f4f8" />
					<g stroke="#34349a" stroke-width=".8">
						<path d="M398 172V208M413 164V216M415 164V218M436 164V230M441 164V233M444 166V235M525 208V282M559 217V290M613 241V300M618 243V302M717 291V347M743 340V380M749 337V380M762 340V378M764 341V377M773 347V371" />
						<path d="M575 245V310M585 246V313M637 318V345M723 335V375" stroke="#55557a" />
					</g>
				</g>
				<path d={cavity} fill="none" stroke="#44448f" stroke-width=".8" />

				<!-- TOOLPATHS -->
				<g clip-path="url(#c-cavity)" fill="none" stroke-width=".9">
					<g stroke="#2a2ad2">
						<path d="M412 212V198Q414 192 421 190Q428 188 434 191L510 234Q525 242 551 243C549 258 560 268 582 270Q600 268 612 278L713 327Q702 333 701 342T705 362Q710 370 736 365H752Q757 371 751 376Q730 384 712 377" />
						<path d="M412 212Q416 204 430 204L512 248Q526 257 551 257C550 272 562 282 590 281Q605 281 616 289L713 343Q702 348 700 356T702 376" />
						<path d="M414 222Q422 216 430 219L500 258Q530 273 550 272C553 287 575 291 595 290Q612 292 622 297L713 357Q704 360 702 379" />
						<path d="M412 198Q412 207 424 216L470 243Q497 237 520 251Q537 263 533 280L560 298" />
						<path d="M508 244Q534 247 535 268Q532 280 549 290L577 305M511 257L534 266L612 300" />
						<path d="M551 243V257M551 272V296M534 275L580 288L640 296" />
						<path d="M560 265L640 302Q660 312 661 330Q655 345 662 352M576 308Q620 302 645 317Q660 327 658 346" />
						<path d="M636 326L724 377M636 331L718 378M636 336L712 380M636 341L704 379M640 324L726 381" />
						<path d="M677 322Q683 335 676 343T682 362M671 326L682 334L674 348L683 354L678 368" />
						<path d="M545 291L575 296M548 294L574 300M553 296L575 304" />
					</g>
					<g stroke="#1a8f2a">
						<path d="M511 272L560 300M612 288L672 317M451 180V192M477 180V190M607 246V262M663 295V312M688 290V305M472 212V238M598 258V300M683 310V330" />
						<path d="M650 352L664 358" />
					</g>
					{#each helixes as helix}
						<g stroke="#c4141f" stroke-width=".8">
							{#each turns(helix) as y}
								<ellipse cx={helix.x} cy={y} rx="14" ry="5" />
							{/each}
							<path d="M{helix.x - 14} {helix.top}V{helix.bottom}M{helix.x + 14} {helix.top}V{helix.bottom}" stroke-width="1.200" />
						</g>
					{/each}
				</g>
				<g fill="none" stroke="#e3da2c">
					<path d="M470 153V240M463 181V240M597 208V262M603 252V308M683 281V360" />
					<path d="M463 181L603 252M451 180V175L570 237L663 287V293M477 180V172L570 222L607 240V247M477 180L560 226L688 284V291M463 181L683 281M607 240L683 281M603 255L683 281" stroke-width=".9" />
				</g>
				<path d="M470 147L468 154H472Z" fill="#16a32c" stroke="#16a32c" />
				<path d="M595.500 202Q597 199 599 202L597 208Z" fill="#b01020" stroke="#b01020" />

				<!-- BORES -->
				{#each bores as bore}
					{#if bore.rim}
						<ellipse cx={bore.x} cy={bore.y} rx={bore.rx + 3} ry={bore.ry + 3} fill="#c9c9da" stroke="#7777a8" stroke-width=".6" />
					{/if}
					<ellipse cx={bore.x} cy={bore.y} rx={bore.rx} ry={bore.ry} fill="url(#g-hole)" stroke="#30307c" stroke-width=".8" />
				{/each}
				<path d="M603 328Q615 324 627 328Q615 333 603 328Z" fill="#a9a9b4" />
				<path d="M597 228V244" stroke="#e3da2c" />

				<!-- ORIGIN AND VIEW AXES -->
				<g font-size="6" font-weight="bold">
					<path d="M334 187V178" stroke="#5555dd" /><path d="M332 181L334 176L337 181Z" fill="#16168e" stroke="#16168e" />
					<path d="M334 188L340 184" stroke="#7fd07f" /><path d="M340 182L346 181L343 187Z" fill="#0d7a17" stroke="#0d7a17" />
					<path d="M334 188L340 191" stroke="#e07070" /><path d="M340 192L343 190L345 194Z" fill="#7e0c12" stroke="#7e0c12" />
					<text x="332" y="173" fill="#4747e8">Z</text><text x="348" y="182" fill="#4fdc4f">Y</text><text x="348" y="199" fill="#ef4040">X</text>
					<path d="M245 510V501" stroke="#5555dd" /><path d="M243 503L245 498L248 503Z" fill="#16168e" stroke="#16168e" />
					<path d="M245 510L251 506" stroke="#4fb04f" /><path d="M251 504L256 503L255 507L252 508Z" fill="#108c1c" stroke="#108c1c" />
					<path d="M245 510L251 513" stroke="#e05050" /><path d="M251 514L254 511L256 515Z" fill="#a80f16" stroke="#a80f16" />
					<text x="243" y="496" fill="#4747e8">Z</text><text x="257" y="504" fill="#4fdc4f">Y</text><text x="257" y="520" fill="#ef4040">X</text>
				</g>
			</svg>

			<div class="mdi">
				<button aria-label="Minimizar vista"><svg viewBox="0 0 8 8"><rect x="1" y="3" width="6" height="2" fill="#bbb" stroke="#777" stroke-width=".6" /></svg></button>
				<button aria-label="Restaurar vista"><svg viewBox="0 0 8 8"><path d="M3 1h4v4H3zM1 3h4v4H1z" fill="#ccc" stroke="#777" /></svg></button>
				<button aria-label="Cerrar vista"><svg viewBox="0 0 8 8"><path d="M1 1l6 6M7 1L1 7" stroke="#888" stroke-width="2.500" /><path d="M1 1l6 6M7 1L1 7" stroke="#ddd" /></svg></button>
			</div>

			<svg class="cube" viewBox="0 0 42 44" aria-label="ViewCube">
				<path d="M21 1L41 9L21 16L1 11Z" fill="#f1f1f1" stroke="#aaa" />
				<path d="M1 11L21 16V43L3 31Z" fill="#dedede" stroke="#aaa" />
				<path d="M21 16L41 9L39 31L21 43Z" fill="#e8e8e8" stroke="#aaa" />
				<g font-size="5" font-weight="bold" fill="#8e8e8e">
					<text x="14" y="12" transform="rotate(-12 14 12)">FRONT</text>
					<text x="3" y="21" transform="rotate(24 3 21)">BOTTOM</text>
					<text x="33" y="33" transform="rotate(-90 33 33)">RIGHT</text>
				</g>
			</svg>

			<div class="navbar">
				<button class="tiny" aria-label="Cerrar barra"><svg viewBox="0 0 5 5"><circle cx="2.500" cy="2.500" r="2" fill="#ddd" stroke="#999" stroke-width=".7" /></svg></button>
				<button class="wheel" aria-label="Rueda de navegación"><svg viewBox="0 0 14 14"><circle cx="7" cy="7" r="6" fill="#eee" stroke="#aaa" /><circle cx="7" cy="7" r="3" fill="#fff" stroke="#aaa" /><path d="M9 9l4 4H8" fill="none" stroke="#aaa" /></svg></button>
				<svg class="dot"><use href="#i-caret" /></svg>
				<hr />
				<button aria-label="Encuadre"><svg viewBox="0 0 12 12"><path d="M4 11L1 6l2 1V2h1v3L5 1h1v4l1-4h1v4l1-3h1v6l-2 3z" fill="#eee" stroke="#999" stroke-width=".8" /></svg></button>
				<button aria-label="Zoom"><svg viewBox="0 0 12 12"><circle cx="5" cy="5" r="3.500" fill="#eee" stroke="#aaa" /><path d="M7 7l4 4" stroke="#888" stroke-width="2" /></svg></button>
				<svg class="dot"><use href="#i-caret" /></svg>
				<button aria-label="Orbita"><svg viewBox="0 0 12 12"><path d="M0 6l3-2v1h2V3L6 1l2 2v2h1V4l3 2-3 2H8v1l-2 2-1-2V8z" fill="#f4f4f4" stroke="#aaa" stroke-width=".8" /></svg></button>
				<svg class="dot"><use href="#i-caret" /></svg>
				<button aria-label="Mirar a"><svg viewBox="0 0 12 12"><path d="M1 4h10v7H1zM3 4V2h2v2M7 4V2h2v2" fill="#eee" stroke="#999" /><path d="M3 6h6v3H3z" fill="#aaa" /></svg></button>
				<button class="tiny" aria-label="Personalizar"><svg viewBox="0 0 5 5"><circle cx="2.500" cy="2.500" r="2" fill="#ddd" stroke="#999" stroke-width=".7" /></svg></button>
			</div>
		</section>
	</main>

	<footer>
		<span class="hint">Para obtener ayuda, pulse F1.</span>
		<span class="count">1</span>
		<span class="count">1</span>
	</footer>
</div>

<style>
	:global(body) {
		margin: 0;
		background: #4d4d4d;
	}

	.sheet {
		position: absolute;
		width: 0;
		height: 0;
	}

	.app {
		display: flex;
		flex-direction: column;
		min-height: 100vh;
		box-sizing: border-box;
		padding: 0 0 3px 2px;
		background: #4d4d4d;
		color: #1e1e1e;
		font: 9px/12px 'Open Sans', 'Noto Sans', sans-serif;
		overflow: hidden;
	}

	button {
		display: flex;
		align-items: center;
		flex: none;
		margin: 0;
		padding: 0;
		border: 0;
		background: none;
		color: inherit;
		font: inherit;
		white-space: nowrap;
		cursor: pointer;
	}

	svg {
		display: block;
		flex: none;
	}

	.ico {
		width: 13px;
		height: 13px;
	}

	.caret {
		width: 5px;
		height: 5px;
	}

	/* TITLE BAR */
	.titlebar {
		display: flex;
		align-items: center;
		height: 23px;
		color: #dcdcdc;
	}

	.logo {
		width: 14px;
		height: 18px;
		margin: 0 9px 0 2px;
		overflow: visible;
	}

	.quick {
		display: flex;
		align-items: center;
		gap: 5px;
	}

	.dim {
		color: #999;
	}

	.sep {
		width: 1px;
		height: 14px;
		background: #777;
	}

	.looks {
		display: flex;
		align-items: center;
		gap: 3px;
		margin-left: 2px;
	}

	.spaced {
		margin-left: 4px;
	}

	.combo {
		display: flex;
		align-items: center;
		box-sizing: border-box;
		width: 77px;
		height: 16px;
		padding: 0 3px 0 2px;
		background: #8e8e8e;
		color: #3f3f3f;
	}

	.combo select {
		flex: 1;
		min-width: 0;
		padding: 0 3px;
		border: 0;
		background: none;
		color: inherit;
		font: inherit;
		appearance: none;
	}

	.doc {
		margin: 0 14px 0 18px;
	}

	.account {
		display: flex;
		flex: 1;
		align-items: center;
		gap: 5px;
	}

	.account input {
		flex: 1;
		min-width: 0;
		height: 15px;
		box-sizing: border-box;
		padding: 0 4px;
		border: 0;
		background: #8e8e8e;
		color: #ececec;
		font: inherit;
	}

	.account input::placeholder {
		color: #e4e4e4;
		opacity: 1;
	}

	.signin {
		gap: 4px;
		padding-right: 8px;
	}

	.window {
		display: flex;
		align-items: center;
		gap: 11px;
		margin: 0 2px 0 36px;
	}

	.min {
		width: 7px;
		height: 8px;
		border-bottom: 2px solid #e4e4e4;
	}

	.max {
		width: 10px;
		height: 9px;
		border: 1px solid #cfcfcf;
		border-top-width: 2px;
	}

	/* RIBBON TABS */
	.tabs {
		display: flex;
		height: 15px;
		color: #d6d6d6;
	}

	.tabs button {
		padding: 0 7px;
	}

	.tabs .file {
		margin-right: 2px;
		background: #f08124;
		color: #fff;
	}

	.tabs .active {
		background: #f5f5f5;
		color: #555;
	}

	.tabs .fold {
		gap: 3px;
		margin-left: 7px;
	}

	.fold svg:first-child {
		width: 12px;
		height: 8px;
	}

	/* RIBBON */
	.ribbon {
		display: grid;
		grid-template-columns: 197fr 184fr 49fr 64fr 73fr 100fr 143fr 56fr 92fr;
		height: 70px;
		background: #f5f5f5;
		border-bottom: 1px solid #5d6a7c;
	}

	.panel {
		display: flex;
		flex-direction: column;
		min-width: 0;
		border-right: 1px solid #dcdcdc;
	}

	.panel:last-child {
		border-right: 0;
	}

	.tools {
		display: flex;
		justify-content: center;
		gap: 4px;
		height: 58px;
		padding-top: 2px;
		box-sizing: border-box;
	}

	.big {
		flex-direction: column;
		align-self: flex-start;
		padding-top: 2px;
	}

	.big svg {
		width: 24px;
		height: 24px;
		margin-bottom: 3px;
	}

	.big .caret {
		width: 5px;
		height: 5px;
		margin: 0;
	}

	.list,
	.mini {
		display: grid;
		grid-auto-rows: 18px;
	}

	.list button {
		gap: 4px;
	}

	.mini button {
		justify-content: center;
		box-sizing: border-box;
		width: 19px;
		height: 17px;
		border: 1px solid #d2d2d2;
		background: #fafafa;
	}

	.title {
		display: flex;
		justify-content: center;
		align-items: center;
		gap: 5px;
	}

	/* MODEL BROWSER */
	main {
		display: flex;
		flex: 1;
	}

	aside {
		width: 22%;
		min-width: 212px;
		max-width: 212px;
		margin-right: 3px;
		background: #fff;
	}

	.browser-tabs {
		display: flex;
		align-items: stretch;
		height: 18px;
		background: #636363;
	}

	.browser-tab {
		display: flex;
		align-items: center;
		gap: 8px;
		padding: 0 10px 0 5px;
		background: #f5f5f5;
		color: #555;
	}

	.browser-tabs svg {
		width: 8px;
		height: 8px;
	}

	.add {
		padding: 0 4px;
	}

	.menu {
		margin-left: auto;
		padding: 0 3px;
	}

	.tree {
		display: grid;
		grid-auto-rows: 1fr;
		height: 176px;
		margin: 0;
		padding: 0 0 0 1px;
		list-style: none;
	}

	.tree li {
		display: flex;
		align-items: center;
		min-height: 0;
	}

	.tree .name {
		margin-left: 1px;
		padding: 0 2px;
	}

	.tree .selected {
		background: #3399ff;
		color: #fff;
	}

	.guide {
		position: relative;
		display: flex;
		align-items: center;
		justify-content: center;
		align-self: stretch;
		flex: none;
		width: 15px;
	}

	/* SUBNODES CARRY THE PARENT LINE ONE COLUMN TO THE LEFT */
	.guide.line:first-child::before {
		left: 22px;
	}

	.guide.line:first-child + .line::before,
	.guide.line:first-child + .line::after {
		left: 22px;
	}

	.guide.line:first-child + .line {
		margin-right: 15px;
	}

	.guide.line:first-child + .line::after {
		right: -15px;
	}

	.line::before,
	.top::before {
		content: '';
		position: absolute;
		left: 7px;
		top: 0;
		bottom: 0;
		border-left: 1px dotted #999;
	}

	.last::before,
	.top::before {
		bottom: 50%;
	}

	.elbow::after {
		content: '';
		position: absolute;
		left: 7px;
		right: 0;
		top: 50%;
		border-top: 1px dotted #999;
	}

	.sign {
		position: relative;
		z-index: 1;
		border: 1px solid #a5a5a5;
		background: #fff;
	}

	.sign svg {
		width: 5px;
		height: 5px;
	}

	.tree input {
		appearance: none;
		width: 11px;
		height: 11px;
		margin: 0 1px;
		box-sizing: border-box;
		border: 1px solid #222;
		background: linear-gradient(135deg, #fff, #cfe2f5);
	}

	.tree input:checked::before {
		content: '';
		display: block;
		width: 2px;
		height: 5px;
		margin: 0 3px;
		border: solid #2b6cb5;
		border-width: 0 2px 2px 0;
		transform: rotate(40deg);
	}

	/* 3D VIEW */
	.view {
		position: relative;
		flex: 1;
		min-width: 0;
		background: #fff;
		border-right: 1px solid #a2a2ab;
	}

	.scene {
		width: 100%;
		height: 100%;
		font-family: 'Open Sans', sans-serif;
	}

	.mdi {
		position: absolute;
		top: 2px;
		right: 0;
		display: flex;
		gap: 3px;
	}

	.mdi svg {
		width: 8px;
		height: 8px;
	}

	.cube {
		position: absolute;
		top: 25px;
		right: 14px;
		width: 42px;
		height: 44px;
	}

	.navbar {
		position: absolute;
		top: 77px;
		right: 1px;
		display: flex;
		flex-direction: column;
		align-items: center;
		gap: 3px;
		box-sizing: border-box;
		width: 19px;
		padding: 2px;
		border: 1px solid #c9c9c9;
		border-radius: 3px;
		background: #f5f5f5;
		color: #888;
	}

	.navbar svg {
		width: 10px;
		height: 10px;
	}

	.navbar .wheel svg {
		width: 13px;
		height: 13px;
	}

	.navbar .tiny {
		align-self: flex-end;
	}

	.navbar .tiny svg,
	.navbar .dot {
		width: 4px;
		height: 4px;
	}

	.navbar hr {
		width: 100%;
		margin: 0;
		border: 0;
		border-top: 1px solid #ccc;
	}

	/* STATUS BAR */
	footer {
		display: flex;
		align-items: center;
		height: 18px;
		background: #f5f5f5;
	}

	.hint {
		flex: 1;
	}

	.count {
		width: 22px;
		padding-left: 8px;
		border-left: 1px solid #c9c9c9;
		line-height: 16px;
	}

	.count:last-child {
		width: 13px;
	}
</style>
